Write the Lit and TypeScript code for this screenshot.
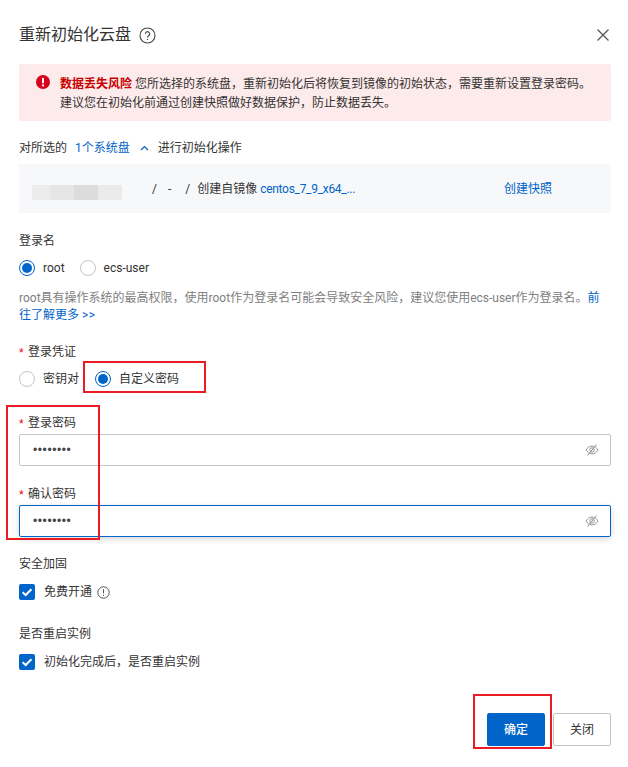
import { LitElement, html, css } from "lit";
import { customElement } from "lit/decorators.js";

const eyeOff = html`<svg class="eye" width="14" height="14" viewBox="0 0 14 14" fill="none" stroke="#939393" stroke-width="1">
  <path d="M1 7c1.600-2.600 3.600-3.900 6-3.900s4.400 1.300 6 3.900c-1.600 2.600-3.600 3.900-6 3.900S2.600 9.600 1 7z"/>
  <circle cx="7" cy="7" r="2.200"/>
  <path d="M11.500 1.500 2.500 12.500"/>
</svg>`;

const check = html`<svg width="16" height="16" viewBox="0 0 16 16" class="cb">
  <rect width="16" height="16" rx="2" fill="#0064c8"/>
  <path d="M3.600 8.200 6.700 11 12.400 5.200" fill="none" stroke="#fff" stroke-width="2"/>
</svg>`;

const radio = (on: boolean) => html`<span class="radio ${on ? "on" : ""}"></span>`;

@customElement("app-root")
export class AppRoot extends LitElement {
  static styles = css`
    :host {
      display: block;
      position: relative;
      width: 628px;
      height: 767px;
      overflow: hidden;
      background: #fff;
      color: #333;
      font: 12px/18px Roboto, "Noto Sans CJK SC", sans-serif;
    }
    .page { display: flex; flex-direction: column; padding: 0 17px 0 19px; }
    .head { display: flex; align-items: center; height: 24px; margin-top: 23px; font-size: 16px; }
    .head .help { margin-left: 8px; }
    .head .close { margin-left: auto; margin-right: 1px; }
    .alert {
      display: flex; margin-top: 17px; height: 57px; box-sizing: border-box;
      padding: 0 17px; align-items: flex-start; gap: 10px;
      background: #fdeaea; border-radius: 2px;
    }
    .alert svg { flex: none; margin-top: 11px; }
    .alert .t { line-height: 19px; margin-top: 11px; }
    .alert b { color: #c80000; font-weight: 700; }
    .sel { display: flex; align-items: center; height: 18px; margin-top: 18px; }
    .link { color: #0064c8; }
    .sel .link { margin-left: 8px; }
    .sel svg { margin: 0 9px 0 10px; }
    .box {
      display: flex; align-items: center; height: 49px; margin-top: 7px;
      background: #f7f8fa; padding-left: 13px;
    }
    .mosaic { display: flex; width: 90px; height: 15px; margin-top: 8px; }
    .mosaic i { display: block; height: 100%; }
    .w18 { width: 18px; background: #ececec; }
    .w24a { width: 24px; background: #e6e6e6; }
    .w24b { width: 24px; background: #dcdcdc; }
    .w24c { width: 24px; background: #ebebeb; }
    .path { margin-left: 30px; display: flex; white-space: pre; }
    .s1 { width: 11px; }
    .s2 { width: 14px; }
    .s3 { width: 7px; }
    .img { letter-spacing: -.3px; }
    .snap { margin-left: 149px; }
    .label { height: 18px; display: flex; align-items: center; }
    .req { color: #e00; width: 9px; margin-top: 1px; flex: none; font-family: "Liberation Sans", sans-serif; }
    .l1 { margin-top: 19px; }
    .radios { display: flex; align-items: center; height: 20px; margin-top: 8px; }
    .opt { display: flex; align-items: center; gap: 8px; }
    .o1 { margin-left: 15px; }
    .o2 { margin-left: 16px; }
    .radio { box-sizing: border-box; width: 16px; height: 16px; border-radius: 50%; border: 1px solid #c4c4c4; background: #fff; flex: none; position: relative; }
    .radio.on { border-color: #0064c8; }
    .radio.on::after { content: ""; position: absolute; inset: 2px; border-radius: 50%; background: #0064c8; }
    .desc { margin-top: 12px; color: #808080; line-height: 17px; height: 34px; }
    .more { letter-spacing: .4px; }
    .l2 { margin-top: 19px; }
    .radios.r2 { margin-top: 8px; }
    .l3 { margin-top: 25px; }
    .input {
      display: flex; align-items: center; justify-content: space-between; box-sizing: border-box;
      height: 32px; margin-top: 2px; padding: 0 11px 0 13px;
      border: 1px solid #c4c4c4; border-radius: 2px; background: #fff;
    }
    .input.focus { border-color: #0064c8; box-shadow: 0 2px 6px rgba(0,0,0,.16); }
    .dots { font-family: "Liberation Sans", sans-serif; font-size: 12px; letter-spacing: .6px; color: #444; }
    .l4 { margin-top: 19px; }
    .l5 { margin-top: 18px; }
    .chk { display: flex; align-items: center; gap: 9px; height: 20px; margin-top: 9px; }
    .chk .info { margin-left: -4px; }
    .l6 { margin-top: 23px; }
    .foot { display: flex; justify-content: flex-end; gap: 8px; margin-top: 41px; }
    .btn { display: flex; align-items: center; justify-content: center; box-sizing: border-box; height: 33px; width: 58px; border-radius: 2px; border: 1px solid #c4c4c4; background: #fff; }
    .btn.pri { background: #0064c8; border-color: #0064c8; color: #fff; font-weight: 500; }
    .mark { position: absolute; box-sizing: border-box; border: 2px solid #ea1c24; pointer-events: none; }
    .m1 { left: 83px; top: 361px; width: 123px; height: 32px; }
    .m2 { left: 6px; top: 405px; width: 94px; height: 135px; }
    .m3 { left: 473px; top: 694px; width: 79px; height: 55px; }
  `;

  render() {
    return html`
      <div class="page">
        <div class="head">
          <span>重新初始化云盘</span>
          <svg class="help" width="17" height="17" viewBox="0 0 17 17" fill="none" stroke="#444" stroke-width="1.100">
            <circle cx="8.500" cy="8.500" r="7.500"/>
            <path d="M6.300 6.800a2.200 2.200 0 1 1 3.400 1.900c-.8.500-1.200.9-1.200 1.800"/>
            <circle cx="8.500" cy="12.400" r=".7" fill="#444" stroke="none"/>
          </svg>
          <svg class="close" width="14" height="14" viewBox="0 0 14 14" fill="none" stroke="#555" stroke-width="1.300">
            <path d="M1.500 1.500l11 11M12.500 1.500l-11 11"/>
          </svg>
        </div>
        <div class="alert">
          <svg width="14" height="14" viewBox="0 0 14 14">
            <circle cx="7" cy="7" r="7" fill="#d9001b"/>
            <rect x="6" y="2.800" width="2" height="5.600" rx=".8" fill="#fff"/>
            <circle cx="7" cy="10.400" r="1.100" fill="#fff"/>
          </svg>
          <div class="t"><b>数据丢失风险</b> 您所选择的系统盘，重新初始化后将恢复到镜像的初始状态，需要重新设置登录密码。<br>建议您在初始化前通过创建快照做好数据保护，防止数据丢失。</div>
        </div>
        <div class="sel">
          <span>对所选的</span><span class="link">1个系统盘</span>
          <svg width="9" height="6" viewBox="0 0 9 6" fill="none" stroke="#0064c8" stroke-width="1.200"><path d="M1 5l3.500-3.500L8 5"/></svg>
          <span>进行初始化操作</span>
        </div>
        <div class="box">
          <div class="mosaic"><i class="w18"></i><i class="w24a"></i><i class="w24b"></i><i class="w24c"></i></div>
          <div class="path"><span>/</span><span class="s1"></span><span>-</span><span class="s2"></span><span>/</span><span class="s3"></span><span>创建自镜像 </span><span class="link img">centos_7_9_x64_...</span></div>
          <span class="link snap">创建快照</span>
        </div>
        <div class="label l1">登录名</div>
        <div class="radios">
          <label class="opt">${radio(true)}<span>root</span></label>
          <label class="opt o1">${radio(false)}<span>ecs-user</span></label>
        </div>
        <div class="desc">root具有操作系统的最高权限，使用root作为登录名可能会导致安全风险，建议您使用ecs-user作为登录名。<span class="link">前往了解更多 <span class="more">&gt;&gt;</span></span></div>
        <div class="label l2"><span class="req">*</span>登录凭证</div>
        <div class="radios r2">
          <label class="opt">${radio(false)}<span>密钥对</span></label>
          <label class="opt o2">${radio(true)}<span>自定义密码</span></label>
        </div>
        <div class="label l3"><span class="req">*</span>登录密码</div>
        <div class="input"><span class="dots">••••••••</span>${eyeOff}</div>
        <div class="label l4"><span class="req">*</span>确认密码</div>
        <div class="input focus"><span class="dots">••••••••</span>${eyeOff}</div>
        <div class="label l5">安全加固</div>
        <div class="chk">${check}<span>免费开通</span>
          <svg class="info" width="13" height="13" viewBox="0 0 13 13" fill="none" stroke="#555" stroke-width="1">
            <circle cx="6.500" cy="6.500" r="5.700"/>
            <path d="M6.500 3.200v4.200M6.500 8.800v1.100"/>
          </svg>
        </div>
        <div class="label l6">是否重启实例</div>
        <div class="chk">${check}<span>初始化完成后，是否重启实例</span></div>
        <div class="foot">
          <div class="btn pri">确定</div>
          <div class="btn">关闭</div>
        </div>
      </div>
      <div class="mark m1"></div>
      <div class="mark m2"></div>
      <div class="mark m3"></div>
    `;
  }
}
